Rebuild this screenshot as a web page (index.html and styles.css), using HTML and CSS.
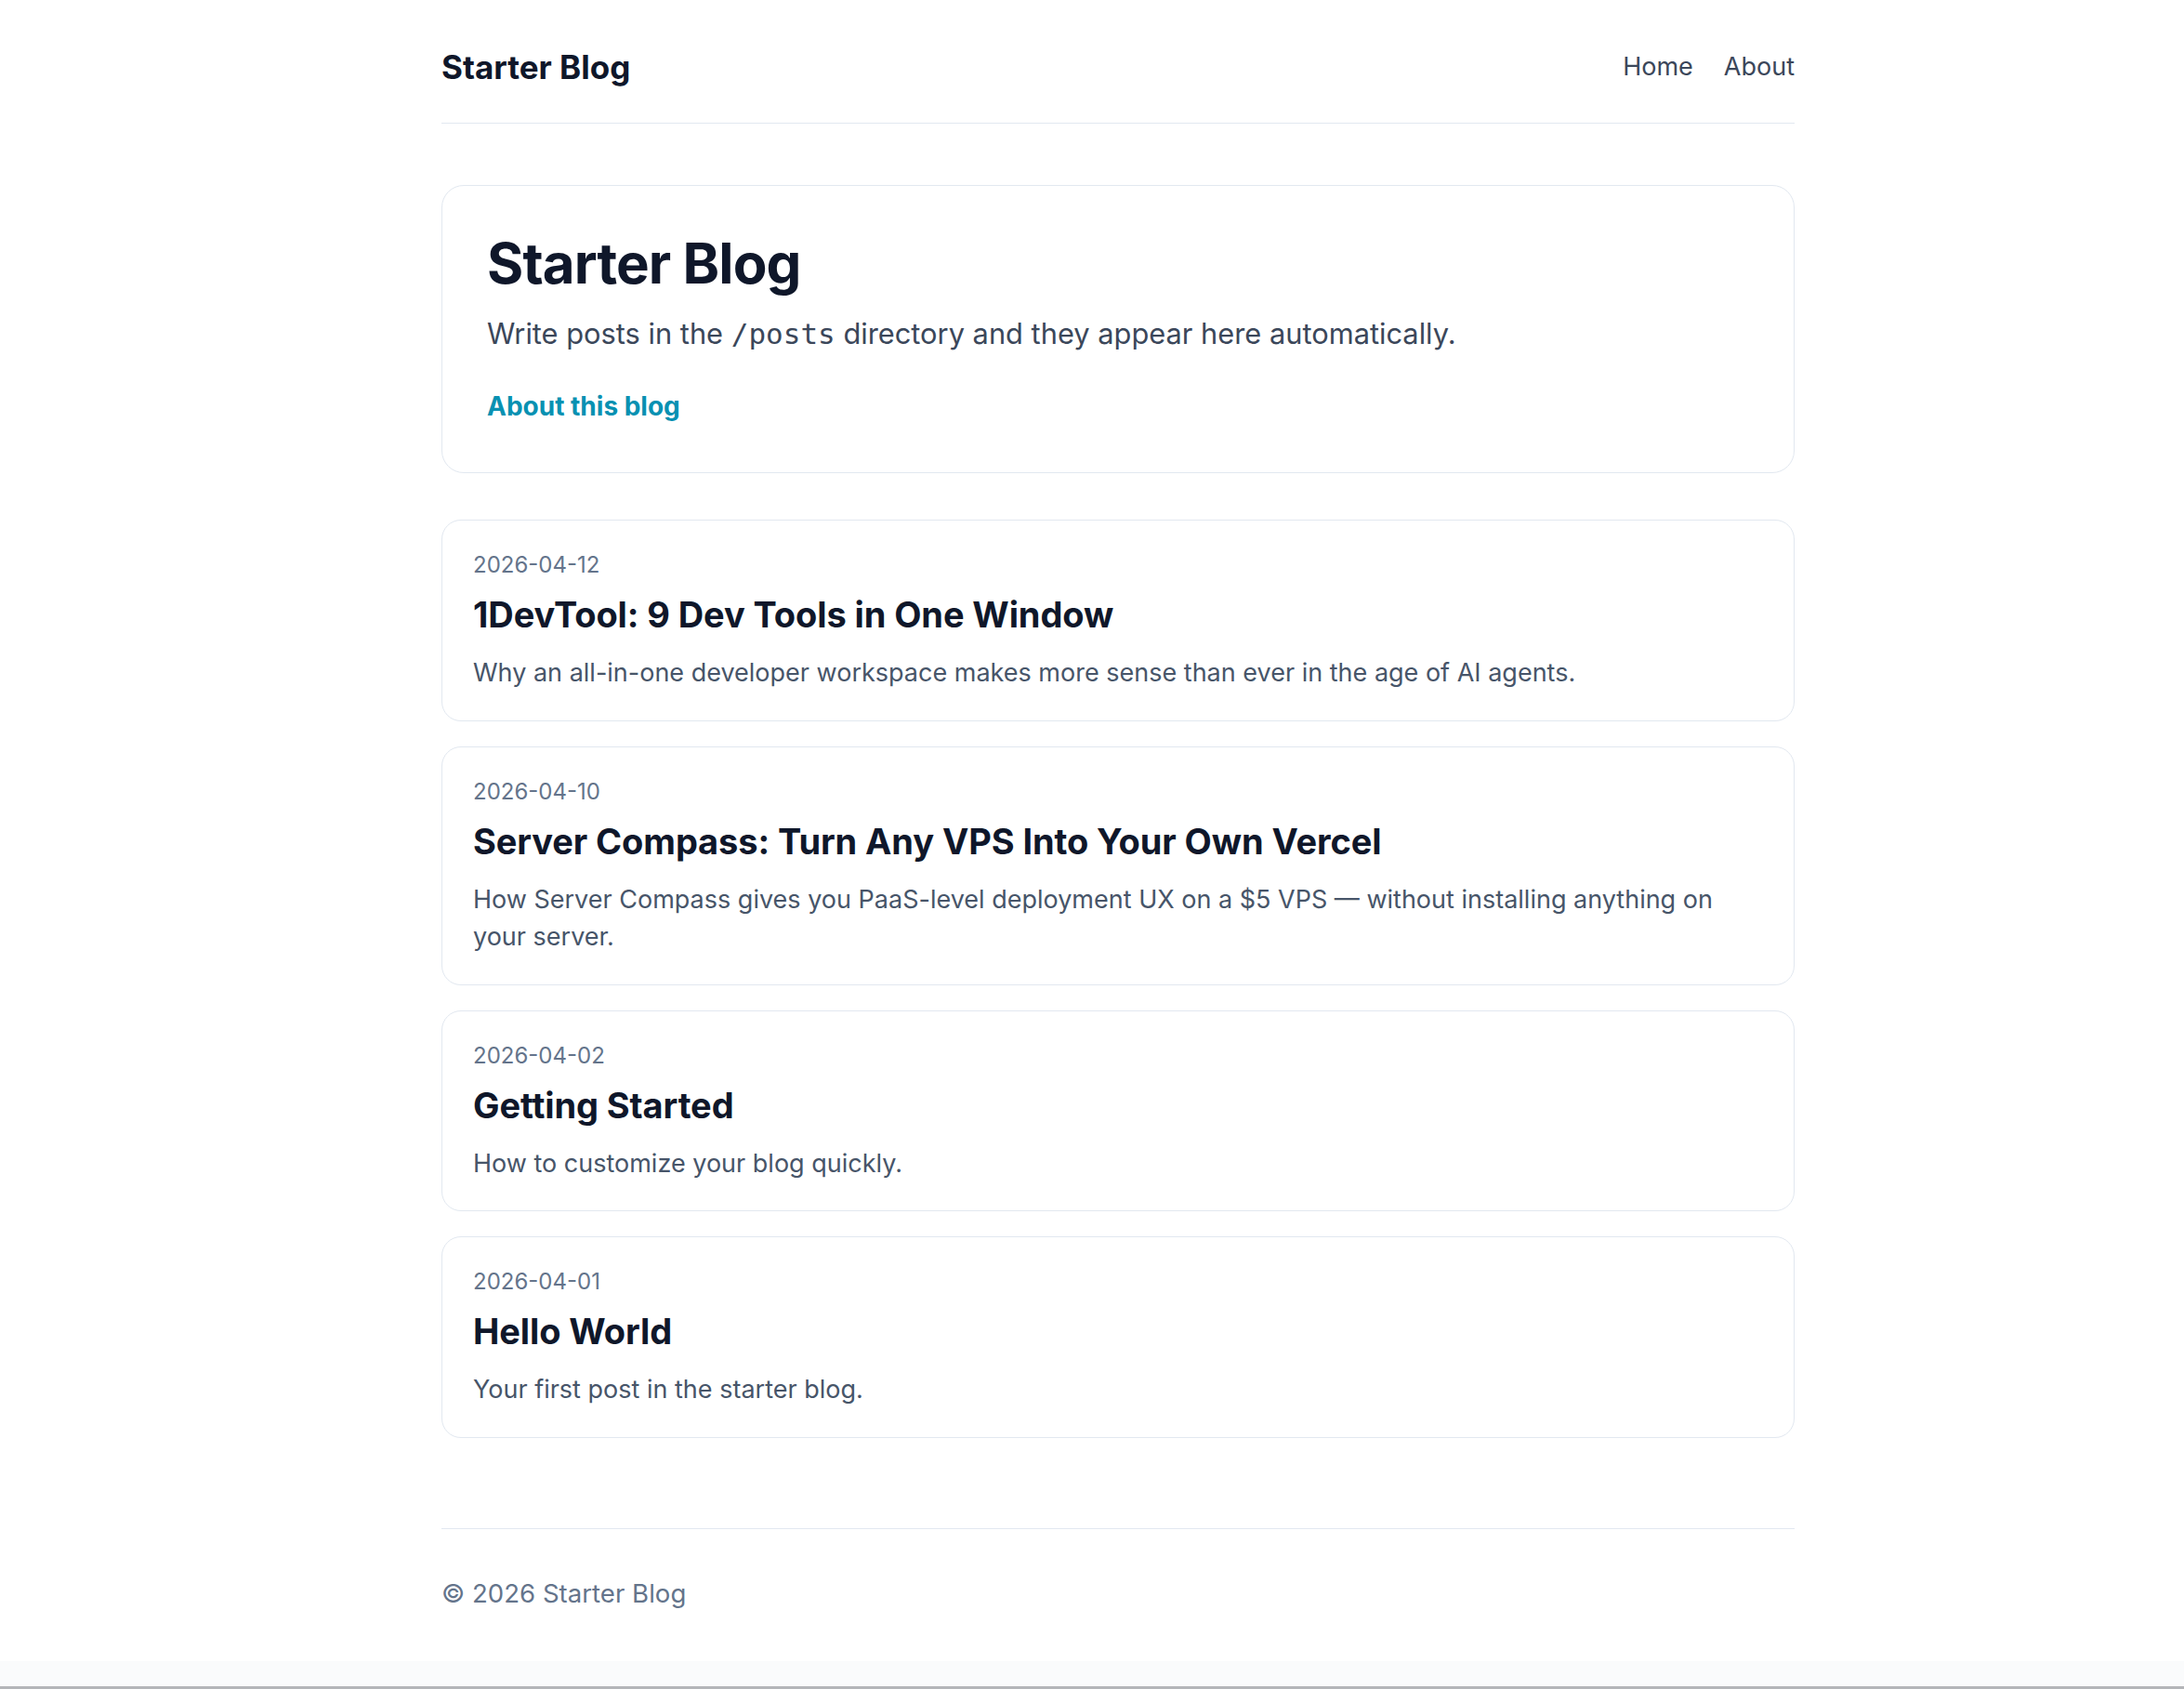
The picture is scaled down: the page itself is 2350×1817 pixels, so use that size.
FILE: index.html
```html
<!DOCTYPE html>
<html lang="en">
<head>
    <meta charset="UTF-8">
    <meta name="viewport" content="width=device-width, initial-scale=1.0">
    <title>Starter Blog</title>
    <link rel="stylesheet" href="styles.css">
</head>
<body>
    <div class="wrap">
        <header class="site-header">
            <a class="brand" href="#">Starter Blog</a>
            <nav class="nav">
                <a href="#">Home</a>
                <a href="#">About</a>
            </nav>
        </header>

        <main>
            <section class="hero">
                <h1>Starter Blog</h1>
                <p>Write posts in the <code>/posts</code> directory and they appear here automatically.</p>
                <a class="hero-link" href="#">About this blog</a>
            </section>

            <ul class="posts">
                <li class="post">
                    <div class="post-date">2026-04-12</div>
                    <h2><a href="#">1DevTool: 9 Dev Tools in One Window</a></h2>
                    <p>Why an all-in-one developer workspace makes more sense than ever in the age of AI agents.</p>
                </li>
                <li class="post">
                    <div class="post-date">2026-04-10</div>
                    <h2><a href="#">Server Compass: Turn Any VPS Into Your Own Vercel</a></h2>
                    <p>How Server Compass gives you PaaS-level deployment UX on a $5 VPS — without installing anything on your server.</p>
                </li>
                <li class="post">
                    <div class="post-date">2026-04-02</div>
                    <h2><a href="#">Getting Started</a></h2>
                    <p>How to customize your blog quickly.</p>
                </li>
                <li class="post">
                    <div class="post-date">2026-04-01</div>
                    <h2><a href="#">Hello World</a></h2>
                    <p>Your first post in the starter blog.</p>
                </li>
            </ul>
        </main>

        <footer class="site-footer">
            &copy; 2026 Starter Blog
        </footer>
    </div>
</body>
</html>
```

FILE: styles.css
```css
html {
    min-height: 100%;
    background: #fafbfc linear-gradient(to bottom, transparent calc(100% - 3px), #b4b6b9 calc(100% - 3px));
}
body {
    font-family: Inter, "Noto Sans", sans-serif;
    margin: 0;
    padding: 0;
    background-color: #ffffff;
    color: #334155;
}
a {
    text-decoration: none;
    color: inherit;
}
.wrap {
    width: 1456px;
    margin-left: 475px;
}

/* header */
.site-header {
    display: flex;
    align-items: center;
    justify-content: space-between;
    padding: 45px 0 33px;
    border-bottom: 1.5px solid #e2e8f0;
}
.brand {
    font-size: 35px;
    line-height: 54px;
    font-weight: 700;
    color: #0f172a;
}
.nav {
    display: flex;
    gap: 33px;
    font-size: 27px;
    line-height: 54px;
    color: #3b475a;
}

/* hero */
main {
    padding-top: 66px;
}
.hero {
    border: 1.5px solid #e2e8f0;
    border-radius: 24px;
    padding: 47px 48px 50px;
}
.hero h1 {
    margin: 0;
    font-size: 60px;
    line-height: 72px;
    font-weight: 700;
    color: #0f172a;
    letter-spacing: -0.9px;
}
.hero p {
    margin: 17px 0 0;
    font-size: 30.8px;
    line-height: 46px;
    color: #3b475a;
}
.hero code {
    font-family: "DejaVu Sans Mono", monospace;
    font-size: 31px;
}
.hero-link {
    display: inline-block;
    margin-top: 34px;
    font-size: 28px;
    line-height: 42px;
    font-weight: 700;
    color: #0891b2;
}

/* post list */
.posts {
    list-style-type: none;
    margin: 50px 0 0;
    padding: 0;
    display: flex;
    flex-direction: column;
    gap: 27px;
}
.post {
    border: 1.5px solid #e2e8f0;
    border-radius: 21px;
    padding: 30px 33px 30px;
}
.post-date {
    font-size: 24px;
    line-height: 36px;
    color: #64748b;
}
.post h2 {
    margin: 11px 0 0;
    font-size: 38px;
    line-height: 48px;
    font-weight: 700;
    color: #0f172a;
    letter-spacing: -0.1px;
}
.post p {
    margin: 19px 0 0;
    font-size: 27px;
    line-height: 40.5px;
    color: #475569;
}

/* footer */
.site-footer {
    margin-top: 97px;
    border-top: 1.5px solid #e2e8f0;
    padding: 48px 0 52px;
    font-size: 27.6px;
    line-height: 42px;
    color: #64748b;
}
```
